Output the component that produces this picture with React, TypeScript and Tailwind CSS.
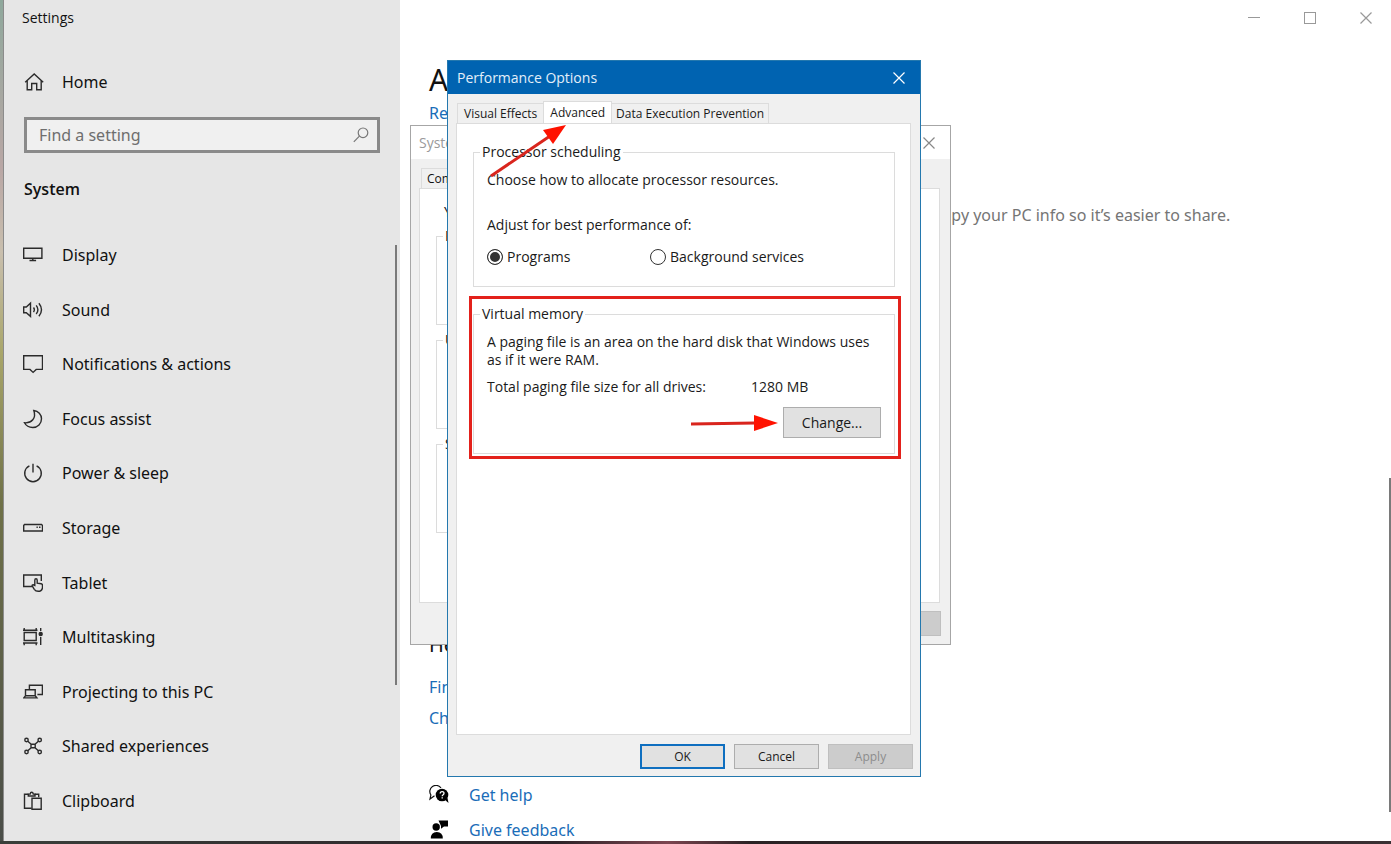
import { useState, type ReactNode } from "react";

const Icon = ({ children }: { children: ReactNode }) => (
  <svg
    viewBox="0 0 20 20"
    className="size-5 shrink-0"
    fill="none"
    stroke="#2b2b2b"
    strokeWidth="1.4"
    aria-hidden="true"
  >
    {children}
  </svg>
);

const navItems: { label: string; icon: ReactNode }[] = [
  {
    label: "Display",
    icon: (
      <>
        <path d="M0.7 3.2h18.2v10H0.7z" />
        <path d="M9.8 13.2v2M6.5 15.5h6.6" />
      </>
    ),
  },
  {
    label: "Sound",
    icon: (
      <>
        <path d="M0.7 7h2.6L7.5 3.2v13.2L3.3 12.8H0.7z" />
        <path d="M10.5 7.5q1.700 2.300 0 4.600M13.200 5.400q3.400 4.300 0 8.600M15.900 3.200q5.200 6.500 0 13" />
      </>
    ),
  },
  {
    label: "Notifications & actions",
    icon: <path d="M0.7 1.8h18.8v13.6h-6.300l-3.100 3-3.100-3H0.700z" />,
  },
  {
    label: "Focus assist",
    icon: <path d="M10.800 1.500c4.500 0.500 7.700 4 7.700 8.300 0 5-3.700 8.700-8.700 8.700-3.700 0-6.800-1.800-8.300-4.700 7 0.700 12-4.600 9.300-12.300z" />,
  },
  {
    label: "Power & sleep",
    icon: <path d="M10 0.800v8.700M6.400 2.900a8.300 8.300 0 1 0 7.200 0" />,
  },
  {
    label: "Storage",
    icon: (
      <>
        <path d="M1.500 6.500h17l1 1v5.500H0.700V7.500z" />
        <path d="M13.500 9.300h1.300M16 9.300h1.500" />
      </>
    ),
  },
  {
    label: "Tablet",
    icon: (
      <>
        <path d="M9 13.500H0.700V2h17.600v6" />
        <path d="M11.800 12.500V7.200q0-1.400 1.200-1.400t1.200 1.400v3l4 0.600q1.300 0.300 1.300 1.600v2.200q-0.500 3.700-4.300 3.700-2.600 0-3.900-2l-2.100-3.400q-0.300-1.200 1-1.100z" />
      </>
    ),
  },
  {
    label: "Multitasking",
    icon: (
      <>
        <path d="M1.200 5.500h12v8h-12zM0 3.200h14.500M0 16h14.500M1.200 1v2.200M13.200 1v2.200M1.200 16v2.200M13.200 16v2.200M17.700 1v3M17.700 10v8" />
        <circle cx="17.700" cy="7" r="1.500" fill="#2b2b2b" />
      </>
    ),
  },
  {
    label: "Projecting to this PC",
    icon: (
      <>
        <path d="M6.400 7.200V3.300h13v9.200h-5" />
        <path d="M2.500 13.700V7.700h9.700v6M0.800 15.900l1.700-2.200h9.700l1.700 2.200z" />
      </>
    ),
  },
  {
    label: "Shared experiences",
    icon: (
      <>
        <circle cx="3.500" cy="4" r="1.700" />
        <circle cx="16.700" cy="4" r="1.700" />
        <circle cx="3.500" cy="16" r="1.700" />
        <circle cx="16.700" cy="16" r="1.700" />
        <path d="M4.800 5.200l3.400 3.100M15.400 5.200l-3.400 3.100M4.800 14.800l3.400-3.100M15.400 14.800l-3.400-3.100M8 8.200h4.200v3.600H8z" />
      </>
    ),
  },
  {
    label: "Clipboard",
    icon: (
      <>
        <path d="M8.700 17.200H1.500V3.200h4M11.700 3.200h4v3" />
        <path d="M5.300 5V3.100h1.800q0.300-1.900 1.600-1.900t1.600 1.900h1.700V5z" />
        <path d="M9 7.300h9.200v11H9z" />
      </>
    ),
  },
];

const CloseGlyph = ({ color }: { color: string }) => (
  <svg viewBox="0 0 12 12" className="size-3" stroke={color} strokeWidth="1.2" aria-hidden="true">
    <path d="M0.5 0.5l11 11M11.5 0.5l-11 11" />
  </svg>
);

function Sidebar() {
  return (
    <aside className="relative flex w-[396px] shrink-0 flex-col bg-[#e6e6e6] pb-[13px]">
      <div className="h-9 pl-[18px] font-['Open_Sans','Noto_Sans',sans-serif] text-sm leading-[35px]">Settings</div>
      <a href="#home" className="mt-8 flex h-7 items-center gap-[18px] pl-5">
        <svg viewBox="0 0 20 20" className="size-5" fill="none" stroke="#2b2b2b" strokeWidth="1.4" aria-hidden="true">
          <path d="M1.200 10.200L10.200 2l9 8.200M3.200 8.700v9h4.500v-6.200h5v6.200h4.500v-9" />
        </svg>
        Home
      </a>
      <label className="mt-[21px] ml-5 mr-5 flex h-9 items-center border-[3px] border-[#8a8a8a] bg-[#f0f0f0] pr-2 pl-3">
        <input
          type="text"
          aria-label="Find a setting"
          placeholder="Find a setting"
          className="min-w-0 flex-1 bg-transparent outline-none placeholder:text-[#6e6e6e]"
        />
        <svg viewBox="0 0 16 16" className="size-4" fill="none" stroke="#777" strokeWidth="1.2" aria-hidden="true">
          <circle cx="10" cy="5.800" r="4.800" />
          <path d="M6.400 9.200L0.800 14.800" />
        </svg>
      </label>
      <h2 className="mt-[22px] pl-5 font-['Open_Sans','Noto_Sans',sans-serif] leading-7 font-semibold">System</h2>
      <nav className="mt-[25px] flex min-h-0 flex-1">
        <ul className="grid flex-1 auto-rows-fr">
          {navItems.map((item) => (
            <li key={item.label} className="flex">
              <a href="#settings" className="flex flex-1 items-center gap-[19px] pl-[19px]">
                <Icon>{item.icon}</Icon>
                {item.label}
              </a>
            </li>
          ))}
        </ul>
      </nav>
      <div className="absolute top-[245px] right-[3px] h-[440px] w-[2px] bg-[#7a7a7a]" />
    </aside>
  );
}

function AboutPage() {
  return (
    <main className="relative flex min-w-0 flex-1 flex-col overflow-hidden bg-white pl-[29px]">
      <header className="flex h-[35px] shrink-0 justify-end gap-1.5">
        <button aria-label="Minimize" className="flex w-[50px] items-center justify-center">
          <span className="h-px w-3 bg-[#999]" />
        </button>
        <button aria-label="Maximize" className="flex w-[50px] items-center justify-center">
          <span className="size-3 border border-[#999]" />
        </button>
        <button aria-label="Close" className="flex w-[50px] items-center justify-center">
          <CloseGlyph color="#999" />
        </button>
      </header>
      <h1 className="mt-[27px] text-[30px] leading-9">A</h1>
      <a href="#read" className="mt-1 leading-[22px] text-[#1a6db8]">
        Re
      </a>
      <p className="mt-20 ml-[505px] leading-[22px] text-[#757575]">copy your PC info so it’s easier to share.</p>
      <h2 className="mt-[405px] text-xl leading-7">He</h2>
      <a href="#find" className="mt-[17px] leading-[22px] text-[#1a6db8]">
        Fin
      </a>
      <a href="#check" className="mt-[9px] leading-[22px] text-[#1a6db8]">
        Ch
      </a>
      <a href="#help" className="mt-[55px] flex items-center gap-5 leading-[22px] text-[#1a6db8]">
        <svg viewBox="0 0 20 20" className="size-5" aria-hidden="true">
          <path d="M5.500 10.800L1 14l0.900-4A6 6 0 1 1 12 3" fill="none" stroke="#111" strokeWidth="1.2" />
          <circle cx="13" cy="10" r="6.300" fill="#000" />
          <path d="M15 14l4.500 4-1-5z" fill="#000" />
          <path d="M11.200 8.600q0-2 1.900-2t1.900 1.700q0 1-1.100 1.700-0.700 0.500-0.700 1.300M13.200 12.300v1.300" fill="none" stroke="#fff" strokeWidth="1.3" />
        </svg>
        Get help
      </a>
      <a href="#feedback" className="mt-[13px] flex items-center gap-5 leading-[22px] text-[#1a6db8]">
        <svg viewBox="0 0 20 20" className="size-5" fill="#000" aria-hidden="true">
          <circle cx="7.200" cy="7" r="3.700" />
          <path d="M1.800 18.500q0-6.500 6-6.500t6 6.500z" />
          <path d="M9.500 0.500H19V6.500h-4L12 8.800V6z" />
        </svg>
        Give feedback
      </a>
      <div className="absolute top-[478px] right-0 h-[334px] w-[2px] bg-[#7a7a7a]" />
    </main>
  );
}

function SystemProperties() {
  const groups = ["P", "U", "S"];
  return (
    <section
      aria-label="System Properties"
      className="absolute top-[125px] left-[410px] flex h-[520px] w-[541px] flex-col border border-[#a6a6a6] bg-[#f0f0f0] font-['Open_Sans','Noto_Sans',sans-serif] text-sm"
    >
      <header className="flex h-[33px] items-center justify-between bg-white pr-[15px] pl-2 text-[#9a9a9a]">
        Syste
        <button aria-label="Close">
          <CloseGlyph color="#888" />
        </button>
      </header>
      <div className="mt-[9px] ml-2.5 flex h-5">
        <button className="border border-b-0 border-[#dcdcdc] px-[5px] text-xs leading-[18px]">Com</button>
      </div>
      <div className="mr-2.5 ml-2 flex flex-1 flex-col border border-[#dcdcdc] bg-white pt-3.5 pr-6 pl-4">
        <p className="pl-2 leading-[18px]">Y</p>
        {groups.map((g) => (
          <fieldset key={g} className="mt-1.5 h-[98px] border border-[#dcdcdc]">
            <legend className="ml-1.5 px-0.5 leading-[18px]">{g}</legend>
          </fieldset>
        ))}
      </div>
      <footer className="flex h-[41px] items-start justify-end pt-2 pr-[9px]">
        <button disabled aria-label="Apply changes" className="h-[25px] w-[85px] border border-[#bfbfbf] bg-[#cccccc]" />
      </footer>
    </section>
  );
}

const radioClass =
  "size-4 appearance-none rounded-full border border-[#333] bg-white checked:bg-[#333] checked:shadow-[inset_0_0_0_2px_#fff]";

function PerformanceOptions() {
  const [target, setTarget] = useState("programs");
  return (
    <section
      role="dialog"
      aria-label="Performance Options"
      className="absolute top-[60px] left-[447px] flex h-[717px] w-[474px] flex-col border border-[#2478ae] bg-[#f0f0f0] font-['Open_Sans','Noto_Sans',sans-serif] text-sm leading-[18px] text-[#1a1a1a]"
    >
      <header className="flex h-[33px] shrink-0 items-center justify-between bg-[#0063b1] pr-[15px] pl-[9px] text-[#e3effa]">
        Performance Options
        <button aria-label="Close">
          <CloseGlyph color="#ffffff" />
        </button>
      </header>

      <div role="tablist" className="ml-[9px] flex h-[29px] shrink-0 items-end text-xs leading-[18px]">
        <button role="tab" className="h-5 border border-r-0 border-b-0 border-[#dcdcdc] px-1.5">
          Visual Effects
        </button>
        <button
          role="tab"
          aria-selected="true"
          className="h-[22px] border border-b-0 border-[#dcdcdc] bg-white px-1.5"
        >
          Advanced
        </button>
        <button role="tab" className="h-5 border border-b-0 border-l-0 border-[#dcdcdc] px-1">
          Data Execution Prevention
        </button>
      </div>

      <div className="mr-[9px] ml-2 flex flex-1 flex-col border border-[#dcdcdc] bg-white pt-[19px] pr-[15px] pl-4">
        <fieldset className="border border-[#dcdcdc] px-[13px] pb-5">
          <legend className="-ml-[7px] px-0.5">Processor scheduling</legend>
          <p className="mt-2.5">Choose how to allocate processor resources.</p>
          <p className="mt-[27px]">Adjust for best performance of:</p>
          <div className="mt-3.5 flex">
            <label className="flex w-[163px] items-center gap-1">
              <input
                type="radio"
                name="target"
                className={radioClass}
                checked={target === "programs"}
                onChange={() => setTarget("programs")}
              />
              Programs
            </label>
            <label className="flex items-center gap-1">
              <input
                type="radio"
                name="target"
                className={radioClass}
                checked={target === "services"}
                onChange={() => setTarget("services")}
              />
              Background services
            </label>
          </div>
        </fieldset>

        <div className="relative mt-[18px]">
          <fieldset className="border border-[#dcdcdc] px-[13px] pb-[15px]">
            <legend className="-ml-[7px] px-0.5">Virtual memory</legend>
            <p className="mt-2.5">
              A paging file is an area on the hard disk that Windows uses
              <br />
              as if it were RAM.
            </p>
            <div className="mt-[9px] flex">
              <span className="w-[264px]">Total paging file size for all drives:</span>
              <span>1280 MB</span>
            </div>
            <div className="mt-[11px] flex justify-end">
              <button className="h-[31px] w-[98px] border border-[#adadad] bg-[#e1e1e1]">Change...</button>
            </div>
          </fieldset>
          <div className="pointer-events-none absolute -top-[9px] -right-1.5 -bottom-[5px] -left-1 border-[3px] border-[#e3211b]" />
        </div>
      </div>

      <footer className="flex h-[41px] shrink-0 justify-end gap-[9px] pt-[9px] pr-[7px] text-xs">
        <button className="h-[25px] w-[85px] border-2 border-[#0f6fc0] bg-[#e1e1e1]">OK</button>
        <button className="h-[25px] w-[85px] border border-[#adadad] bg-[#e1e1e1]">Cancel</button>
        <button disabled className="h-[25px] w-[85px] border border-[#bfbfbf] bg-[#cccccc] text-[#8d8d8d]">
          Apply
        </button>
      </footer>

      <svg
        viewBox="0 0 474 717"
        className="pointer-events-none absolute -top-px -left-px h-[717px] w-[474px]"
        aria-hidden="true"
      >
        <path d="M44 116L103 76" stroke="#d9251d" strokeWidth="3" />
        <path d="M119 65L96 70L106 84z" fill="#ff1200" />
        <path d="M244 364L308 363" stroke="#d9251d" strokeWidth="3" />
        <path d="M331 363L307 355V371z" fill="#ff1200" />
      </svg>
    </section>
  );
}

export default function App() {
  return (
    <div className="relative flex h-screen min-h-[844px] flex-col overflow-hidden bg-[linear-gradient(90deg,#3a3f3a,#2c2328_40%,#7c4550_48%,#2a2224_54%,#3a3033)] pb-[3px] font-['Noto_Sans',sans-serif] text-base text-[#111]">
      <div className="flex min-h-0 flex-1">
        <div className="w-[3px] shrink-0 bg-[linear-gradient(180deg,#8fa89c,#b9a7a5_20%,#c9bfae_30%,#a9a66a_42%,#6f7148_60%,#4a4d48)]" />
        <div className="w-px shrink-0 bg-[#8c8c8c]" />
        <Sidebar />
        <AboutPage />
      </div>
      <SystemProperties />
      <PerformanceOptions />
    </div>
  );
}
